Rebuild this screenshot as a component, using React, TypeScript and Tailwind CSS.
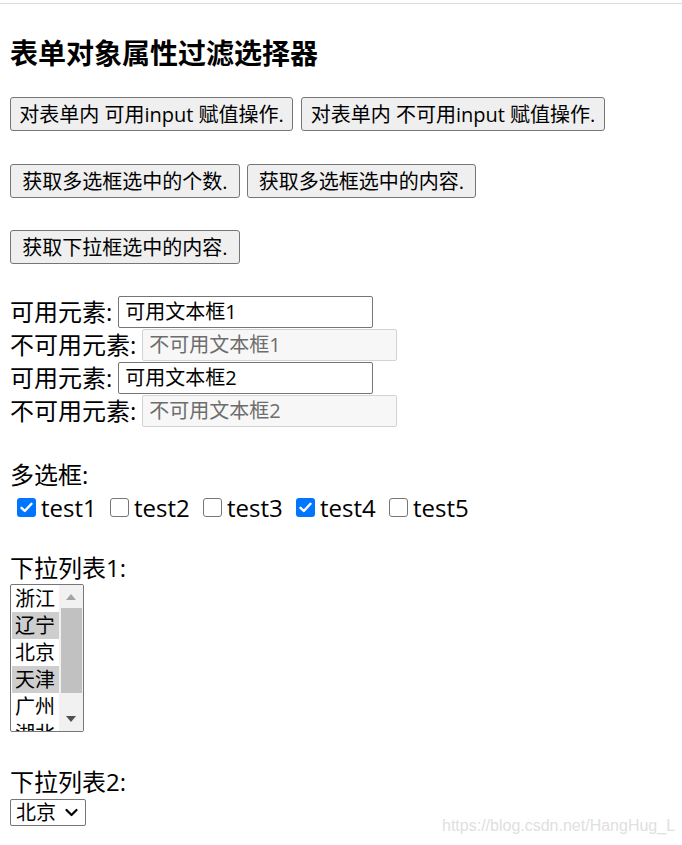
import React from "react";

const F = "font-['Open_Sans','Noto_Sans_CJK_SC',sans-serif]";

function Btn({ w, children }: { w: string; children: React.ReactNode }) {
  return (
    <div
      className={`${w} h-[34px] flex items-center justify-center pt-[2px] rounded-[3px] border border-[#767676] bg-[#efefef] text-[20px] leading-[26px] text-black`}
    >
      {children}
    </div>
  );
}

function InputRow({
  label,
  value,
  disabled,
}: {
  label: string;
  value: string;
  disabled?: boolean;
}) {
  return (
    <div className="h-[33px] flex items-center pl-[10px]">
      <span className="text-[24px] leading-[33px]">{label}</span>
      <div
        className={`ml-[6px] w-[255px] h-[32px] flex items-center pl-[6px] rounded-[2px] border text-[20px] leading-[26px] ${
          disabled
            ? "border-[#d3d3d3] bg-[#f7f7f7] text-[#6d6d6d]"
            : "border-[#767676] bg-white text-black"
        }`}
      >
        {value}
      </div>
    </div>
  );
}

function Check({ on, label }: { on?: boolean; label: string }) {
  return (
    <div className="w-[93px] flex items-center">
      {on ? (
        <div className="w-[19px] h-[19px] rounded-[3px] bg-[#0075ff] flex items-center justify-center">
          <svg width="13" height="11" viewBox="0 0 13 11">
            <polyline
              points="1.5,5.8 4.8,9 11.5,1.8"
              fill="none"
              stroke="white"
              strokeWidth="2.4"
              strokeLinecap="round"
              strokeLinejoin="round"
            />
          </svg>
        </div>
      ) : (
        <div className="w-[19px] h-[19px] rounded-[3px] border border-[#767676] bg-white" />
      )}
      <span className="ml-[5px] text-[24px] leading-[33px]">{label}</span>
    </div>
  );
}

export default function App() {
  const items = [
    { t: "浙江", s: false },
    { t: "辽宁", s: true },
    { t: "北京", s: false },
    { t: "天津", s: true },
    { t: "广州", s: false },
    { t: "湖北", s: false },
  ];
  return (
    <div className={`relative w-[682px] h-[845px] bg-white text-black overflow-hidden ${F}`}>
      <div className="h-[3px]" />
      <div className="h-px bg-[#dcdcdc]" />
      <h3 className="mt-[31px] ml-[10px] text-[28px] font-bold leading-[36px]">
        表单对象属性过滤选择器
      </h3>

      <div className="mt-[26px] flex gap-[8px] pl-[10px]">
        <Btn w="w-[283px]">对表单内 可用input 赋值操作.</Btn>
        <Btn w="w-[304px]">对表单内 不可用input 赋值操作.</Btn>
      </div>
      <div className="mt-[33px] flex gap-[7px] pl-[10px]">
        <Btn w="w-[230px]">获取多选框选中的个数.</Btn>
        <Btn w="w-[229px]">获取多选框选中的内容.</Btn>
      </div>
      <div className="mt-[32px] flex pl-[10px]">
        <Btn w="w-[230px]">获取下拉框选中的内容.</Btn>
      </div>

      <div className="mt-[31px]">
        <InputRow label="可用元素:" value="可用文本框1" />
        <InputRow label="不可用元素:" value="不可用文本框1" disabled />
        <InputRow label="可用元素:" value="可用文本框2" />
        <InputRow label="不可用元素:" value="不可用文本框2" disabled />
      </div>

      <div className="mt-[31px] pl-[10px] h-[33px] text-[24px] leading-[33px]">多选框:</div>
      <div className="h-[33px] flex items-center pl-[17px]">
        <Check on label="test1" />
        <Check label="test2" />
        <Check label="test3" />
        <Check on label="test4" />
        <Check label="test5" />
      </div>

      <div className="mt-[27px] pl-[10px] h-[33px] text-[24px] leading-[33px]">下拉列表1:</div>
      <div className="ml-[10px] w-[74px] h-[148px] rounded-[2px] border border-[#767676] bg-white flex overflow-hidden">
        <div className="w-[48px] pl-px">
          {items.map((it) => (
            <div
              key={it.t}
              className={`h-[27px] pl-[3px] text-[20px] leading-[27px] ${it.s ? "bg-[#cecece]" : ""}`}
            >
              {it.t}
            </div>
          ))}
        </div>
        <div className="w-[24px] bg-[#f1f1f1] flex flex-col">
          <div className="h-[23px] flex items-center justify-center">
            <svg width="10" height="6" viewBox="0 0 10 6">
              <polygon points="5,0 10,6 0,6" fill="#a3a3a3" />
            </svg>
          </div>
          <div className="h-[85px] ml-[2px] mr-px bg-[#c1c1c1]" />
          <div className="flex-1 flex items-end justify-center pb-[9px]">
            <svg width="10" height="6" viewBox="0 0 10 6">
              <polygon points="0,0 10,0 5,6" fill="#505050" />
            </svg>
          </div>
        </div>
      </div>

      <div className="mt-[33px] pl-[10px] h-[33px] text-[24px] leading-[33px]">下拉列表2:</div>
      <div className="mt-px ml-[10px] w-[76px] h-[27px] rounded-[2px] border border-[#767676] bg-white flex items-center">
        <span className="pl-[5px] text-[20px] leading-[25px]">北京</span>
        <svg className="ml-[9px]" width="13" height="9" viewBox="0 0 13 9">
          <polyline
            points="1.5,2 6.5,7 11.5,2"
            fill="none"
            stroke="#000"
            strokeWidth="2.2"
            strokeLinecap="round"
            strokeLinejoin="round"
          />
        </svg>
      </div>

      <div className="absolute left-[442px] top-[816px] text-[16px] leading-[20px] text-[#e0e0e0] font-['Liberation_Sans',sans-serif]">
        https://blog.csdn.net/HangHug_L
      </div>
    </div>
  );
}
